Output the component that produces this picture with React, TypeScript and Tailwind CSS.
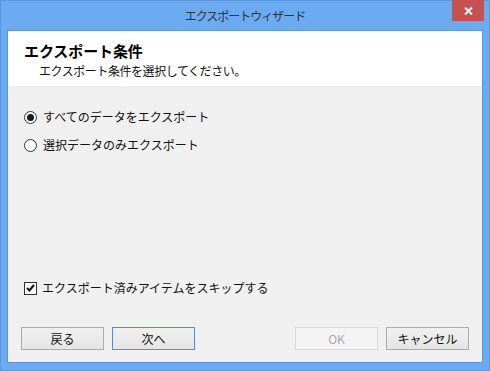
import React, { useState } from 'react';

const font = { fontFamily: '"Noto Sans CJK JP", "Noto Sans", sans-serif' };

interface RadioProps {
  checked: boolean;
  label: string;
  onSelect: () => void;
}

const Radio: React.FC<RadioProps> = ({ checked, label, onSelect }) => (
  <div className="flex h-[20px] items-center cursor-default" onClick={onSelect}>
    <span className="flex h-[13px] w-[13px] items-center justify-center rounded-full border border-[#333] bg-white">
      {checked && <span className="h-[7px] w-[7px] rounded-full bg-[#1a1a1a]" />}
    </span>
    <span className="ml-[6px] text-[12px] leading-none text-[#111]">{label}</span>
  </div>
);

const App: React.FC = () => {
  const [mode, setMode] = useState<'all' | 'selected'>('all');
  const [skip, setSkip] = useState(true);

  return (
    <div
      className="relative flex h-[371px] w-[490px] flex-col border border-[#5b97dd] bg-[#6aabf2]"
      style={font}
    >
      {/* title bar */}
      <div className="flex h-[29px] shrink-0 items-center justify-center pt-[1px]">
        <span className="text-[12px] tracking-[-1px] text-[#333]">エクスポートウィザード</span>
      </div>
      <button className="absolute right-[5px] top-[-1px] flex h-[21px] w-[32px] items-center justify-center bg-[#c75050]">
        <svg width="9" height="8" viewBox="0 0 9 8">
          <path d="M1 0.5 L8 7.5 M8 0.5 L1 7.5" stroke="#fff" strokeWidth="2" />
        </svg>
      </button>

      {/* client area */}
      <div className="mx-[6px] mb-[7px] flex flex-1 flex-col border border-[#5b97dd] bg-[#f0f0f0]">
        <div className="flex h-[55px] shrink-0 flex-col bg-white">
          <div className="mt-[10px] pl-[16px] text-[15px] font-bold leading-[19px] tracking-[-0.1px] text-black">
            エクスポート条件
          </div>
          <div className="mt-[3px] pl-[31px] text-[12px] leading-[15px] tracking-[-0.45px] text-[#111]">
            エクスポート条件を選択してください。
          </div>
        </div>

        <div className="flex flex-1 flex-col pl-[16px] pt-[21px]">
          <div className="flex flex-col gap-[8px]">
            <Radio checked={mode === 'all'} label="すべてのデータをエクスポート" onSelect={() => setMode('all')} />
            <Radio checked={mode === 'selected'} label="選択データのみエクスポート" onSelect={() => setMode('selected')} />
          </div>
          <div className="flex-1" />
          <div className="flex h-[20px] items-center cursor-default" onClick={() => setSkip(!skip)}>
            <span className="flex h-[13px] w-[13px] items-center justify-center border border-[#333] bg-white">
              {skip && (
                <svg width="9" height="8" viewBox="0 0 9 8">
                  <path d="M1 4 L3.5 6.5 L8 1" stroke="#111" strokeWidth="2" fill="none" />
                </svg>
              )}
            </span>
            <span className="ml-[5px] text-[12px] leading-none text-[#111]">
              エクスポート済みアイテムをスキップする
            </span>
          </div>
        </div>

        <div className="mb-[12px] mt-[29px] flex h-[23px] px-[13px]">
          <button className="h-full w-[83px] border border-[#acacac] bg-gradient-to-b from-[#f0f0f0] to-[#e5e5e5] text-[12px] text-[#111]">
            戻る
          </button>
          <button className="ml-[8px] h-full w-[83px] border border-[#3399ff] bg-gradient-to-b from-[#f0f0f0] to-[#e5e5e5] text-[12px] text-[#111]">
            次へ
          </button>
          <div className="flex-1" />
          <button disabled className="h-full w-[83px] border border-[#d9d9d9] bg-[#f4f4f4] text-[12px] text-[#a8a8a8]">
            OK
          </button>
          <button className="ml-[8px] h-full w-[83px] border border-[#acacac] bg-gradient-to-b from-[#f0f0f0] to-[#e5e5e5] text-[12px] text-[#111]">
            キャンセル
          </button>
        </div>
      </div>
    </div>
  );
};

export default App;
